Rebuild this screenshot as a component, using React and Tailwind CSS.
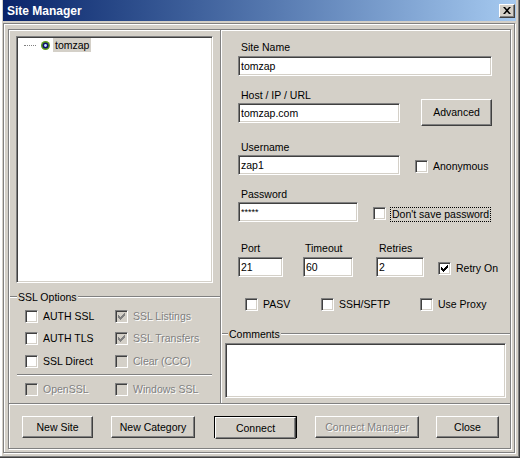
import React from "react";

const sunken =
  "border border-t-[#808080] border-l-[#808080] border-b-white border-r-white shadow-[inset_1px_1px_0_#404040,inset_-1px_-1px_0_#d4d0c8]";
const raised =
  "border border-t-white border-l-white border-b-[#404040] border-r-[#404040] shadow-[inset_-1px_-1px_0_#808080]";
const etchedH = "h-[2px] border-t border-t-[#808080] border-b border-b-white";
const grayText = "text-[#808080] [text-shadow:1px_1px_0_#fff]";

const CHECK =
  "M8 2h1v1h-1z M7 3h2v1h-2z M2 4h1v1h-1z M6 4h3v1h-3z M2 5h2v1h-2z M5 5h3v1h-3z M2 6h5v1h-5z M3 7h3v1h-3z M4 8h1v1h-1z";

function Box({ checked, disabled }) {
  return (
    <div className={`w-[13px] h-[13px] shrink-0 ${sunken} ${disabled ? "bg-[#d4d0c8]" : "bg-white"}`}>
      {checked && (
        <svg width="11" height="11" viewBox="0 0 11 11" shapeRendering="crispEdges">
          <path d={CHECK} fill={disabled ? "#808080" : "#000"} />
        </svg>
      )}
    </div>
  );
}

function Check({ label, checked, disabled, className = "" }) {
  return (
    <div className={`flex items-center h-[13px] ${className}`}>
      <Box checked={checked} disabled={disabled} />
      <span className={`ml-[5px] whitespace-nowrap ${disabled ? grayText : ""}`}>{label}</span>
    </div>
  );
}

function Field({ value, className = "" }) {
  return (
    <div className={`h-[20px] bg-white flex items-center pl-[2px] whitespace-nowrap ${sunken} ${className}`}>
      {value}
    </div>
  );
}

function Button({ children, className = "", disabled }) {
  return (
    <div className={`h-[22px] flex items-center justify-center bg-[#d4d0c8] whitespace-nowrap ${raised} ${className}`}>
      <span className={disabled ? grayText : ""}>{children}</span>
    </div>
  );
}

function GroupHead({ label, lead }) {
  return (
    <div className="h-[14px] flex items-center">
      <div className={`${etchedH} ${lead}`} />
      <span className="px-[1px] whitespace-nowrap">{label}</span>
      <div className={`${etchedH} flex-1`} />
    </div>
  );
}

function TreeIcon() {
  return (
    <svg width="9" height="9" viewBox="0 0 9 9" className="shrink-0">
      <circle cx="4.5" cy="4.5" r="4.5" fill="#5d9b1a" />
      <circle cx="4.5" cy="4.5" r="3" fill="#101070" />
      <circle cx="4.5" cy="4.5" r="1.4" fill="#c8e8ff" />
    </svg>
  );
}

export default function App() {
  return (
    <div className="w-[520px] h-[458px] overflow-hidden bg-[#d4d0c8] pl-[3px] pr-[4px] pb-[3px] shadow-[inset_-1px_-1px_0_#404040,inset_-2px_-2px_0_#808080,inset_2px_0_0_#fff] font-['Liberation_Sans',Arial,sans-serif] text-[10.5px] leading-[13px] text-black">
      {/* title bar */}
      <div className="h-[21px] flex items-center justify-between pl-[4px] pr-[1px] bg-linear-to-r from-[#0a246a] to-[#a6caf0]">
        <span className="text-white font-bold text-[12px] leading-[14px]">Site Manager</span>
        <div className={`w-[16px] h-[14px] bg-[#d4d0c8] flex items-center justify-center ${raised}`}>
          <svg width="8" height="7" viewBox="0 0 8 7">
            <path d="M0 0h2l2 2.3 2-2.3h2l-3 3.5 3 3.5h-2l-2-2.3-2 2.3h-2l3-3.5z" fill="#000" />
          </svg>
        </div>
      </div>

      {/* client */}
      <div className="mt-[2px] w-[512px] h-[430px] border border-[#808080] shadow-[inset_1px_1px_0_#fff,1px_1px_0_#fff] pl-[4px] pt-[5px]">
        <div className="w-[503px] h-[420px] border border-[#808080] shadow-[inset_1px_1px_0_#fff,1px_1px_0_#fff] flex flex-col">
          <div className="h-[373px] flex">
            {/* left */}
            <div className="w-[211px] flex flex-col">
              <div className={`mt-[6px] ml-[7px] w-[197px] h-[247px] bg-white ${sunken}`}>
                <div className="mt-[1px] flex items-center h-[14px]">
                  <div className="ml-[7px] w-[12px] border-t border-dotted border-[#808080]" />
                  <div className="ml-[5px]">
                    <TreeIcon />
                  </div>
                  <div className="ml-[3px] h-[14px] bg-[#d4d0c8] px-[2px] flex items-center">tomzap</div>
                </div>
              </div>

              <div className="mt-[7px]">
                <GroupHead label="SSL Options" lead="ml-[1px] w-[7px]" />
              </div>
              <div className="mt-[6px] flex pl-[16px]">
                <Check label="AUTH SSL" className="w-[90px]" />
                <Check label="SSL Listings" checked disabled />
              </div>
              <div className="mt-[9px] flex pl-[16px]">
                <Check label="AUTH TLS" className="w-[90px]" />
                <Check label="SSL Transfers" checked disabled />
              </div>
              <div className="mt-[10px] flex pl-[16px]">
                <Check label="SSL Direct" className="w-[90px]" />
                <Check label="Clear (CCC)" disabled />
              </div>
              <div className={`mt-[6px] ml-[8px] w-[195px] ${etchedH}`} />
              <div className="mt-[7px] flex pl-[16px]">
                <Check label="OpenSSL" disabled className="w-[90px]" />
                <Check label="Windows SSL" disabled />
              </div>
            </div>

            <div className="w-[2px] border-l border-l-[#808080] border-r border-r-white" />

            {/* right */}
            <div className="flex-1 flex flex-col">
              <div className="mt-[11px] ml-[19px] h-[13px]">Site Name</div>
              <Field value="tomzap" className="mt-[2px] ml-[16px] w-[254px]" />

              <div className="mt-[13px] ml-[16px] flex">
                <div className="w-[162px] flex flex-col">
                  <div className="ml-[3px] h-[13px]">Host / IP / URL</div>
                  <Field value="tomzap.com" className="mt-[1px] w-[162px]" />
                </div>
                <Button className="ml-[21px] mt-[10px] w-[71px] h-[27px]">Advanced</Button>
              </div>

              <div className="mt-[15px] ml-[16px] flex flex-col">
                <div className="ml-[3px] h-[13px]">Username</div>
                <div className="mt-[1px] flex items-start">
                  <Field value="zap1" className="w-[162px]" />
                  <Check label="Anonymous" className="ml-[15px] mt-[5px]" />
                </div>
              </div>

              <div className="mt-[13px] ml-[16px] flex flex-col">
                <div className="ml-[3px] h-[13px]">Password</div>
                <div className="mt-[1px] flex items-start">
                  <Field value={<span className="text-[9px]">*****</span>} className="w-[120px]" />
                  <div className="ml-[15px] mt-[5px] flex items-start">
                    <Box />
                    <div className="ml-[4px] h-[15px] border border-dotted border-black px-[1px] flex items-center whitespace-nowrap">
                      Don't save password
                    </div>
                  </div>
                </div>
              </div>

              <div className="mt-[20px] ml-[16px] flex items-start">
                <div className="w-[65px] flex flex-col">
                  <div className="ml-[3px] h-[13px]">Port</div>
                  <Field value="21" className="mt-[2px] w-[45px]" />
                </div>
                <div className="w-[73px] flex flex-col">
                  <div className="ml-[2px] h-[13px]">Timeout</div>
                  <Field value="60" className="mt-[2px] w-[50px]" />
                </div>
                <div className="w-[62px] flex flex-col">
                  <div className="ml-[3px] h-[13px]">Retries</div>
                  <Field value="2" className="mt-[2px] w-[48px]" />
                </div>
                <Check label="Retry On" checked className="mt-[20px]" />
              </div>

              <div className="mt-[21px] ml-[23px] flex">
                <Check label="PASV" className="w-[76px]" />
                <Check label="SSH/SFTP" className="w-[99px]" />
                <Check label="Use Proxy" />
              </div>

              <div className="mt-[16px]">
                <GroupHead label="Comments" lead="w-[6px]" />
              </div>
              <div className={`mt-[2px] ml-[3px] w-[281px] h-[55px] bg-white ${sunken}`} />
            </div>
          </div>

          <div className={etchedH} />

          <div className="flex-1 flex items-start pl-[13px] pt-[11px]">
            <Button className="w-[71px]">New Site</Button>
            <Button className="ml-[18px] w-[84px]">New Category</Button>
            <div className="ml-[19px] w-[83px] h-[22px] border border-black flex">
              <Button className="flex-1 h-[20px]">Connect</Button>
            </div>
            <Button className="ml-[18px] w-[104px]" disabled>
              Connect Manager
            </Button>
            <Button className="ml-[17px] w-[63px]">Close</Button>
          </div>
        </div>
      </div>
    </div>
  );
}
